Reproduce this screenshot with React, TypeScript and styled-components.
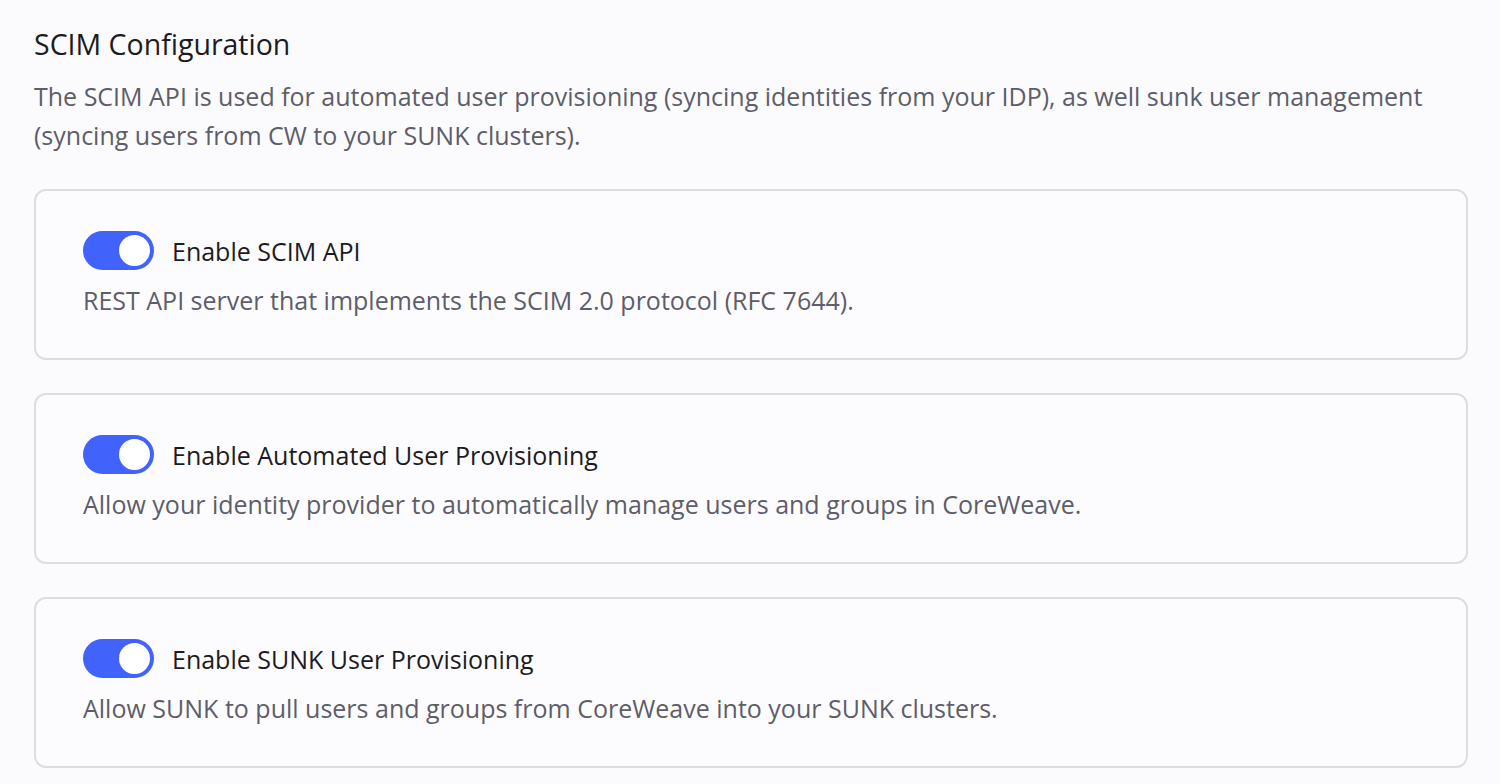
import React, { useState } from 'react';
import styled, { createGlobalStyle } from 'styled-components';

type settingType = {
  id: string;
  title: string;
  description: string;
};

const SETTINGS: settingType[] = [
  {
    id: 'scim-api',
    title: 'Enable SCIM API',
    description: 'REST API server that implements the SCIM 2.0 protocol (RFC 7644).',
  },
  {
    id: 'auto-provisioning',
    title: 'Enable Automated User Provisioning',
    description: 'Allow your identity provider to automatically manage users and groups in CoreWeave.',
  },
  {
    id: 'sunk-provisioning',
    title: 'Enable SUNK User Provisioning',
    description: 'Allow SUNK to pull users and groups from CoreWeave into your SUNK clusters.',
  },
];

const GlobalStyle = createGlobalStyle`
  body {
    margin: 0;
    background-color: #fbfbfd;
    font-family: "Open Sans", Lato, sans-serif;
    -webkit-font-smoothing: antialiased;
  }
`;

interface TogglePropTypes {
  on: boolean;
  onChange: () => void;
}

const Toggle = ({ on, onChange }: TogglePropTypes) => (
  <Switch type="button" role="switch" aria-checked={on} $on={on} onClick={onChange}>
    <Knob $on={on} />
  </Switch>
);

const SettingCard = ({ setting }: { setting: settingType }) => {
  const [enabled, setEnabled] = useState(true);

  return (
    <Card>
      <CardHeader>
        <Toggle on={enabled} onChange={() => setEnabled(!enabled)} />
        <Label>{setting.title}</Label>
      </CardHeader>
      <CardText>{setting.description}</CardText>
    </Card>
  );
};

const App = () => (
  <>
    <GlobalStyle />
    <Page>
      <Heading>SCIM Configuration</Heading>
      <Intro>
        The SCIM API is used for automated user provisioning (syncing identities from your IDP), as well sunk
        user management (syncing users from CW to your SUNK clusters).
      </Intro>
      <CardList>
        {SETTINGS.map((setting) => (
          <SettingCard key={setting.id} setting={setting} />
        ))}
      </CardList>
    </Page>
  </>
);

const Page = styled.main`
  width: 1434px;
  padding: 26px 0 0 34px;
`;

const Heading = styled.h2`
  margin: 0;
  font-size: 28.5px;
  line-height: 36px;
  font-weight: 400;
  color: #1c1b22;
`;

const Intro = styled.p`
  margin: 15px 0 0;
  font-size: 25px;
  line-height: 39px;
  color: #5e5d6a;
`;

const CardList = styled.div`
  display: flex;
  flex-direction: column;
  gap: 33px;
  margin-top: 34px;
`;

const Card = styled.section`
  display: flex;
  flex-direction: column;
  gap: 12px;
  padding: 40px 47px;
  border: 2px solid #dddce3;
  border-radius: 12px;
  background-color: #fcfcfe;
`;

const CardHeader = styled.div`
  display: flex;
  align-items: center;
  gap: 18px;
`;

const Label = styled.span`
  font-size: 25px;
  color: #1c1b22;
`;

const CardText = styled.div`
  font-size: 25px;
  line-height: 36px;
  color: #5e5d6a;
`;

const Switch = styled.button<{ $on: boolean }>`
  position: relative;
  flex: none;
  width: 71px;
  height: 39px;
  padding: 0;
  border: none;
  border-radius: 20px;
  background-color: ${({ $on }) => ($on ? '#4263fb' : '#c9c8d2')};
  cursor: pointer;
`;

const Knob = styled.span<{ $on: boolean }>`
  position: absolute;
  top: 4px;
  left: ${({ $on }) => ($on ? '36px' : '4px')};
  width: 31px;
  height: 31px;
  border-radius: 50%;
  background-color: #ffffff;
  transition: left 0.15s ease-out;
`;

export default App;
